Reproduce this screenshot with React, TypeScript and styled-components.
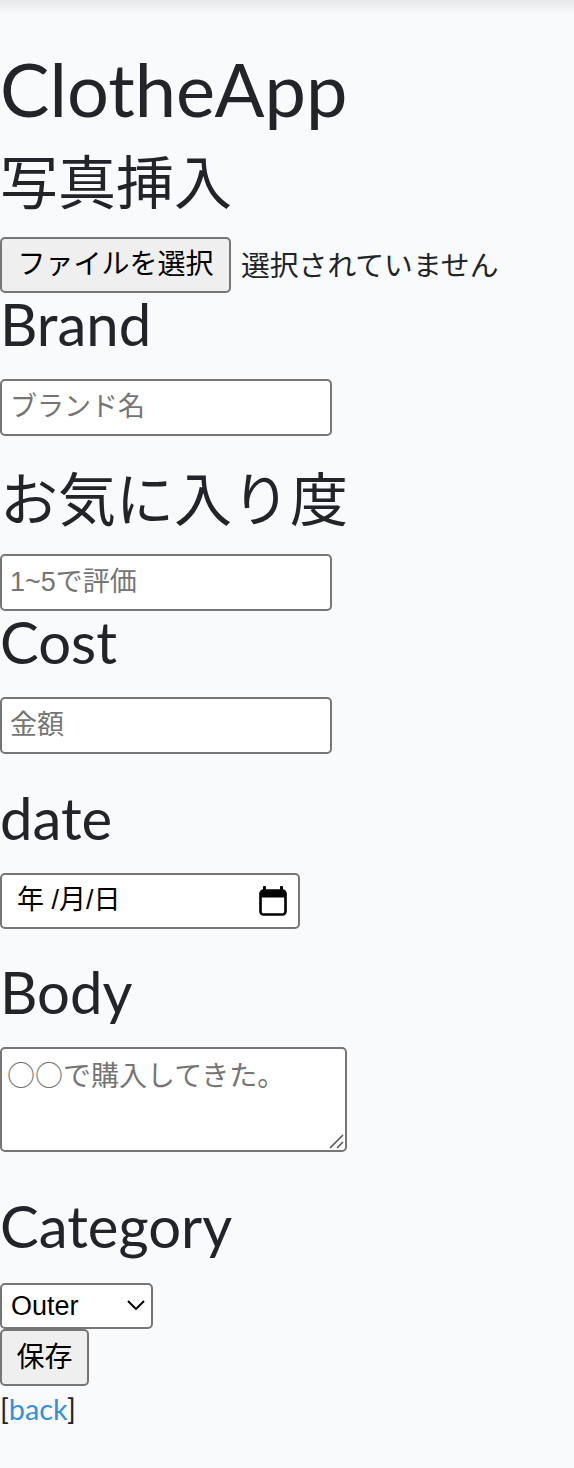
import styled, { createGlobalStyle } from 'styled-components';

const GlobalStyle = createGlobalStyle`
  html, body {
    margin: 0;
    padding: 0;
    background: #f8fafc;
  }
  body {
    font-family: Lato, "Noto Sans CJK JP", sans-serif;
    font-size: 28.8px;
    line-height: 1.6;
    color: #212529;
  }
`;

const controlFont = `"Liberation Sans", "Noto Sans CJK JP", sans-serif`;

const TopShadow = styled.div`
  height: 14px;
  background: linear-gradient(180deg, rgba(0, 0, 0, 0.07) 0%, rgba(0, 0, 0, 0) 100%);
`;

const Main = styled.main`
  padding: 0;
`;

const Title = styled.h1`
  margin: 31px 0 0;
  font-size: 74px;
  line-height: 88px;
  font-weight: 400;
`;

const Label = styled.h2<{ $gap: number }>`
  margin: ${(p) => p.$gap}px 0 24px;
  font-size: 58px;
  line-height: 62px;
  font-weight: 400;
`;

const FileRow = styled.div`
  display: flex;
  align-items: center;
  height: 56px;
`;

const GreyButton = styled.button<{ $width: number }>`
  box-sizing: border-box;
  width: ${(p) => p.$width}px;
  height: 57px;
  padding: 0;
  background: #efefef;
  border: 2px solid #767676;
  border-radius: 5px;
  color: #000;
  font-family: ${controlFont};
  font-size: 28px;
  line-height: 1;
`;

const FileButton = styled(GreyButton)`
  height: 56px;
`;

const FileStatus = styled.span`
  margin-left: 10px;
  font-size: 28.8px;
  line-height: 1;
`;

const TextInput = styled.input`
  display: block;
  box-sizing: border-box;
  width: 332px;
  height: 57px;
  padding: 0 8px;
  background: #fff;
  border: 2px solid #767676;
  border-radius: 5px;
  font-family: ${controlFont};
  font-size: 27px;
  color: #000;
  &::placeholder {
    color: #757575;
  }
`;

const DateBox = styled.div`
  box-sizing: border-box;
  display: flex;
  align-items: center;
  justify-content: space-between;
  width: 300px;
  height: 56px;
  padding: 0 11px 0 15px;
  background: #fff;
  border: 2px solid #767676;
  border-radius: 5px;
  font-family: ${controlFont};
  font-size: 27px;
  color: #000;
`;

const AreaWrap = styled.div`
  position: relative;
  width: 347px;
  height: 105px;
`;

const BodyArea = styled.textarea`
  display: block;
  box-sizing: border-box;
  width: 100%;
  height: 100%;
  padding: 9px 5px;
  background: #fff;
  border: 2px solid #767676;
  border-radius: 5px;
  resize: none;
  font-family: "Noto Sans CJK JP", sans-serif;
  font-size: 28px;
  line-height: 1.2;
  &::placeholder {
    color: #757575;
  }
`;

const Grip = styled.svg`
  position: absolute;
  right: 3px;
  bottom: 3px;
  pointer-events: none;
`;

const SelectWrap = styled.div`
  position: relative;
  width: 153px;
  height: 46px;
`;

const CategorySelect = styled.select`
  box-sizing: border-box;
  width: 100%;
  height: 100%;
  padding: 0 0 0 9px;
  appearance: none;
  background: #fff;
  border: 2px solid #767676;
  border-radius: 5px;
  font-family: ${controlFont};
  font-size: 27px;
  color: #000;
`;

const Chevron = styled.svg`
  position: absolute;
  right: 8px;
  top: 19px;
  pointer-events: none;
`;

const SaveButton = styled(GreyButton)`
  display: block;
  margin-top: 2px;
`;

const BackLine = styled.div`
  font-size: 28.8px;
  line-height: 46px;
`;

const BackLink = styled.a`
  color: #3490dc;
  text-decoration: none;
`;

const CalendarIcon = () => (
  <svg width="28" height="30" viewBox="0 0 28 30">
    <rect x="4" y="0" width="3" height="6" rx="1" fill="#000" />
    <rect x="21" y="0" width="3" height="6" rx="1" fill="#000" />
    <rect x="1.5" y="4.5" width="25" height="24" rx="3" fill="none" stroke="#000" strokeWidth="2.6" />
    <path d="M1.5 7.5a3 3 0 0 1 3-3h19a3 3 0 0 1 3 3v4h-25z" fill="#000" />
  </svg>
);

export default function App() {
  return (
    <>
      <GlobalStyle />
      <TopShadow />
      <Main>
        <Title>ClotheApp</Title>

        <Label $gap={18}>写真挿入</Label>
        <FileRow>
          <FileButton type="button" $width={231}>ファイルを選択</FileButton>
          <FileStatus>選択されていません</FileStatus>
        </FileRow>

        <Label $gap={0}>Brand</Label>
        <TextInput type="text" placeholder="ブランド名" />

        <Label $gap={32}>お気に入り度</Label>
        <TextInput type="text" placeholder="1~5で評価" />

        <Label $gap={0}>Cost</Label>
        <TextInput type="text" placeholder="金額" />

        <Label $gap={33}>date</Label>
        <DateBox>
          <span>年 /月/日</span>
          <CalendarIcon />
        </DateBox>

        <Label $gap={32}>Body</Label>
        <AreaWrap>
          <BodyArea placeholder="○○で購入してきた。" />
          <Grip width="16" height="16" viewBox="0 0 16 16">
            <path d="M2 15L15 2M9 15L15 9" stroke="#555" strokeWidth="1.6" />
          </Grip>
        </AreaWrap>

        <Label $gap={43}>Category</Label>
        <SelectWrap>
          <CategorySelect defaultValue="Outer">
            <option>Outer</option>
            <option>Tops</option>
            <option>Bottoms</option>
            <option>Shoes</option>
          </CategorySelect>
          <Chevron width="18" height="10" viewBox="0 0 18 10">
            <path d="M1 1l8 8 8-8" fill="none" stroke="#000" strokeWidth="2" />
          </Chevron>
        </SelectWrap>
        <SaveButton type="button" $width={89}>保存</SaveButton>

        <BackLine>
          [<BackLink href="#">back</BackLink>]
        </BackLine>
      </Main>
    </>
  );
}
